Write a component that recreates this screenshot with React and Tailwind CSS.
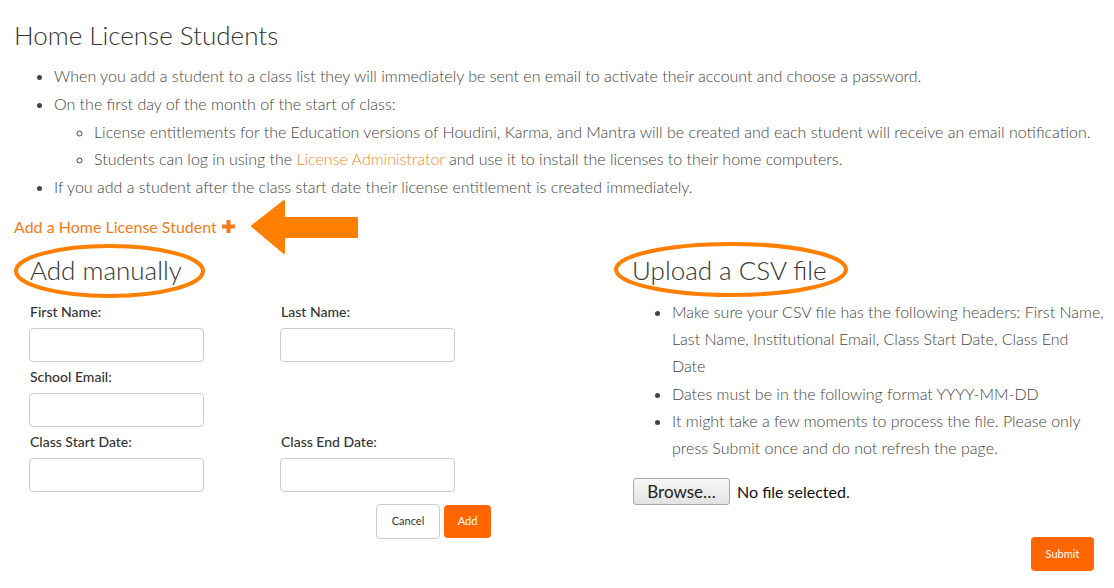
import React from "react";

function Field({ label, className = "" }) {
  return (
    <div className={"flex flex-col " + className}>
      <label className="text-[14px] leading-[18px] font-medium text-[#333] pl-px">{label}</label>
      <input type="text" className="mt-[7px] w-[175px] h-[34px] border border-[#ccc] rounded-[4px] bg-white outline-none" />
    </div>
  );
}

export default function App() {
  return (
    <div
      className="relative w-[1114px] h-[588px] bg-white overflow-hidden text-[#444]"
      style={{ fontFamily: "Lato, 'Open Sans', sans-serif" }}
    >
      <div className="px-[14px] pt-[20px]">
        <h1 className="text-[26px] leading-[30px] font-light text-[#333]">Home License Students</h1>
        <ul className="mt-[12px] pl-[40px] list-disc text-[16px] font-light leading-[27.75px]">
          <li>When you add a student to a class list they will immediately be sent en email to activate their account and choose a password.</li>
          <li>
            On the first day of the month of the start of class:
            <ul className="pl-[40px] list-[circle]">
              <li>License entitlements for the Education versions of Houdini, Karma, and Mantra will be created and each student will receive an email notification.</li>
              <li>
                Students can log in using the <a className="text-[#f7862a]">License Administrator</a> and use it to install the licenses to their home computers.
              </li>
            </ul>
          </li>
          <li>If you add a student after the class start date their license entitlement is created immediately.</li>
        </ul>
        <div className="mt-[16px] text-[16px] leading-[20px] text-[#f47b20] flex items-center">
          <span>Add a Home License Student</span>
          <svg width="13" height="13" viewBox="0 0 13 13" className="ml-[5px]">
            <rect x="4.5" y="0" width="4" height="13" fill="#f47b20" />
            <rect x="0" y="4.5" width="13" height="4" fill="#f47b20" />
          </svg>
        </div>

        <div className="flex mt-[16px]">
          {/* Left column */}
          <div className="w-[616px] shrink-0 pl-[15px]">
            <h2 className="text-[26px] leading-[34px] font-light text-[#333] pl-px">Add manually</h2>
            <div className="mt-[16px] grid grid-cols-[251px_251px]">
              <Field label="First Name:" />
              <Field label="Last Name:" />
              <Field label="School Email:" className="mt-[6px]" />
              <div />
              <Field label="Class Start Date:" className="mt-[6px]" />
              <Field label="Class End Date:" className="mt-[6px]" />
            </div>
            <div className="w-[462px] flex justify-end items-center gap-[4px] mt-[12px]">
              <button className="w-[64px] h-[35px] border border-[#ccc] rounded-[4px] bg-white text-[11px] text-[#333]">Cancel</button>
              <button className="w-[47px] h-[33px] rounded-[4px] bg-[#ff6600] text-[11px] text-white">Add</button>
            </div>
          </div>

          {/* Right column */}
          <div className="w-[474px] shrink-0 pl-[2px]">
            <h2 className="text-[26px] leading-[34px] font-light text-[#333]">Upload a CSV file</h2>
            <ul className="mt-[11px] pl-[40px] list-disc text-[16px] font-light leading-[27.25px]">
              <li>Make sure your CSV file has the following headers: First Name, Last Name, Institutional Email, Class Start Date, Class End Date</li>
              <li>Dates must be in the following format YYYY-MM-DD</li>
              <li>It might take a few moments to process the file. Please only press Submit once and do not refresh the page.</li>
            </ul>
            <div className="mt-[17px] ml-px flex items-center">
              <button className="w-[97px] h-[27px] border border-[#a9a9a9] rounded-[3px] bg-gradient-to-b from-[#f8f8f8] to-[#e2e2e2] text-[17px] text-[#222] leading-none">Browse…</button>
              <span className="ml-[7px] text-[16px] text-[#111]">No file selected.</span>
            </div>
            <div className="flex justify-end mt-[32px] pr-[10px]">
              <button className="w-[63px] h-[34px] rounded-[4px] bg-[#ff6600] text-[11px] text-white">Submit</button>
            </div>
          </div>
        </div>
      </div>

      {/* Annotations */}
      <svg className="absolute left-0 top-0 pointer-events-none" width="1114" height="588">
        <ellipse cx="109.5" cy="271" rx="93.5" ry="25" fill="none" stroke="#ff8000" strokeWidth="4" />
        <ellipse cx="731" cy="269.5" rx="115" ry="25.5" fill="none" stroke="#ff8000" strokeWidth="4" />
        <path
          d="M252 226 L284 201 L284 218 L357 218 L357 237 L284 237 L284 253 Z"
          fill="#ff8000"
          stroke="#ff8000"
          strokeWidth="2"
          strokeLinejoin="round"
        />
      </svg>
    </div>
  );
}
